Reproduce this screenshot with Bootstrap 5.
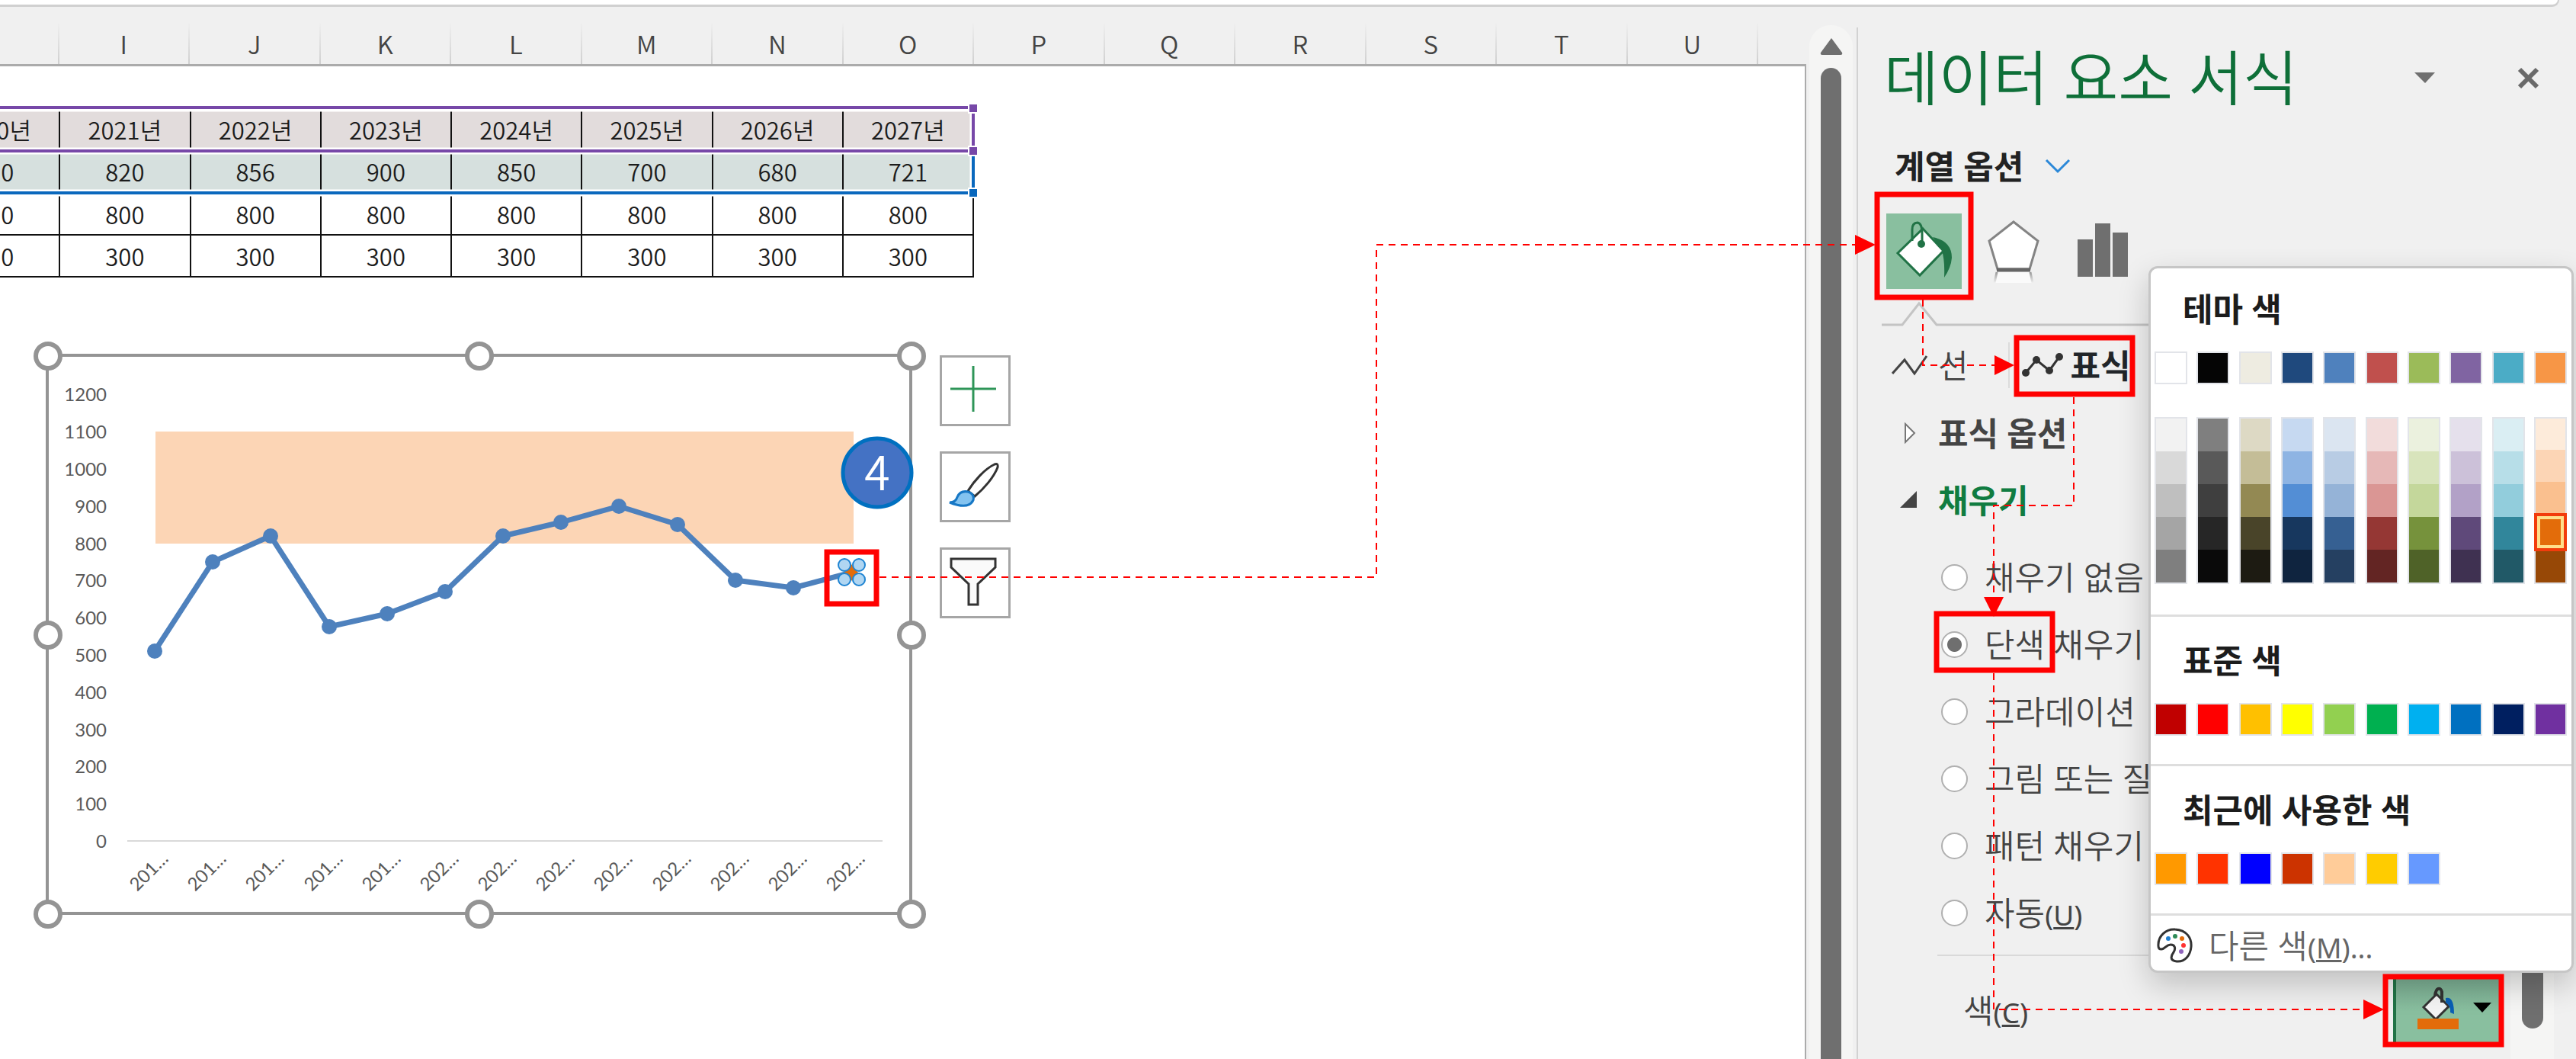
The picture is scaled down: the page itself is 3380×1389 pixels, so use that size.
<!DOCTYPE html>
<html lang="ko">
<head>
<meta charset="utf-8">
<meta name="viewport" content="width=device-width, initial-scale=1">
<title>데이터 요소 서식</title>
<link rel="stylesheet" href="https://cdn.jsdelivr.net/npm/bootstrap@5.3.0/dist/css/bootstrap.min.css">
<style>
  body{font-family:"Noto Sans","Noto Sans CJK KR",sans-serif;background:#f0f0f0;color:#444;font-size:43px;line-height:1;height:100vh}
  .formula-strip{height:9px;background:#fff;border-bottom:3px solid #d0d0d0;border-right:2px solid #d0d0d0;border-bottom-right-radius:12px;margin-right:22px}
  /* worksheet */
  .col-heads{height:78px;padding-top:22px;border-bottom:3px solid #ababab;overflow:hidden}
  .col-heads>div{margin-left:-94px}
  .col-heads span{flex:1 1 0;display:flex;align-items:center;justify-content:center;border-right:2px solid;border-image:linear-gradient(#efefef,#cfcfcf) 1;font-family:"Noto Sans CJK KR",sans-serif;font-size:33px;font-weight:350}
  .col-heads span.sel-col{color:#1e88e5}
  .col-heads .tail{flex:0 0 63px;border:0}
  .sheet-body{background:#fff;border-right:2px solid #ababab;overflow:hidden;padding-top:54px}
  .range-wrap{width:1372px;margin-left:-94px}
  .range-table{width:100%;height:223px;table-layout:fixed;border-collapse:collapse;color:#1c1c1c;text-align:center;font-family:"Noto Sans CJK KR",sans-serif;font-size:31px;line-height:31px}
  .range-table th,.range-table td{border:2px solid #111;font-weight:350;padding:0;vertical-align:middle}
  .range-table .years{background:#e2dcdc}
  .range-table .values{background:#d6e0de}
  .range-marks{left:0;top:-8px;pointer-events:none}
  .chart-row{margin-top:84px;padding-left:44px}
  .chart-row svg text{font-family:Lato,sans-serif;font-size:24px;fill:#595959}
  .chart-tools{gap:33px;margin-left:18px;padding-top:18px}
  .chart-tools button{width:93px;height:93px;background:#fff;border:3px solid #a6a6a6;padding:0;display:flex}
  .v-track{width:57px;background:#f5f5f4;border-radius:28px 28px 0 0;margin:24px 5px 0 4px;padding-top:16px}
  .v-thumb{width:27px;background:#6f6f6f;border-radius:14px 14px 0 0;margin-top:16px}
  /* pane */
  .fmt-pane{width:944px;margin-top:27px;border-left:2px solid #d2d2d2;padding-top:16px}
  .pane-head{height:100px;padding:0 48px 0 34px}
  .pane-head h1{font-size:78px;font-weight:350;color:#0e6f38;margin:0;line-height:98px}
  .plain-btn{background:none;border:0;padding:0;display:flex}
  .opt-row{height:128px;padding:4px 0 0 48px;font-weight:700;color:#222;gap:28px}
  .icon-tabs{height:99px;padding-left:37px;gap:34px}
  .icon-tabs button{height:99px}
  .tile-on{width:99px;background:#89bf9f}
  .notch{display:block;margin-left:31px}
  .sub-tabs{height:100px;padding-left:44px}
  .sub-tabs .sep{width:2px;height:60px;background:#dcdcdc;margin:0 16px 0 52px}
  .sec-row{height:78px;padding-left:53px;font-weight:700}
  .sec-row.open-sec{height:98px;color:#107c41}
  .sec-row svg{flex:none}
  .fill-list{padding:8px 0 0 109px}
  .fill-list .form-check{height:88px;margin:0;padding:0;display:flex;align-items:center;gap:22px;white-space:nowrap}
  .fill-list .form-check-input{width:35px;height:35px;margin:0;float:none;border:2px solid #b0b0b0;background-color:#fff}
  .fill-list .form-check-input:checked{background-image:radial-gradient(circle,#6f6f6f 0 9px,transparent 10px);background-size:100% 100%}
  .thin{font-weight:350}
  .key{font-size:37px;font-weight:400}
  .pane-rule{height:2px;background:#d9d9d9;margin:11px 0 0 104px}
  .color-row{height:83px;margin-top:30px;padding-left:138px;padding-right:15px}
  .color-btn{width:139px;height:83px;border:0;border-left:4px solid #217346;background:linear-gradient(#79ab90,#89bf9f 50%);padding:0}
  .p-track{width:57px;background:#f5f5f4;margin-right:29px}
  .p-thumb{width:28px;height:920px;background:#6f6f6f;border-radius:14px}
  /* colour menu */
  .color-menu{top:349px;right:3px;width:558px;background:#fff;border:3px solid #c6c6c6;border-radius:12px;box-shadow:0 16px 40px rgba(0,0,0,.2);z-index:3;padding-top:24px}
  .color-menu h2{font-size:43px;line-height:60px;font-weight:700;color:#1c1c1c;margin:0 0 25px 42px}
  .sw-grid{display:grid;grid-template-columns:repeat(10,43px);justify-content:space-between;padding:0 6px 0 5px}
  .sw{height:43px;border:2px solid #e2e4e9;padding:0;display:block;width:43px}
  .shade{border:2px solid #e2e4e9;height:219px;display:flex;flex-direction:column}
  .shade button{flex:1 1 0;border:0;padding:0}
  .shade .picked{margin:0 -2px;border:4px solid #f23c0c;box-shadow:inset 0 0 0 4px #ffdf8c}
  .menu-rule{height:3px;background:#dedede;margin:37px 0 28px}
  #shades{margin-top:43px;padding-bottom:3px}
  .more-link{height:72px;margin-top:-28px;padding:6px 0 0 8px;gap:21px;color:#666;text-decoration:none}
  .notes{left:0;top:0;z-index:5;pointer-events:none}
  .notes text{font-family:"Noto Sans CJK KR",sans-serif;font-size:61px;font-weight:350;fill:#fff}
</style>
<script src="https://cdn.jsdelivr.net/npm/bootstrap@5.3.0/dist/js/bootstrap.bundle.min.js"></script>
</head>
<body class="d-flex flex-column overflow-hidden position-relative">
<div class="formula-strip flex-shrink-0"></div>
<div class="d-flex flex-grow-1" style="min-height:0">
  <main class="d-flex flex-column flex-grow-1" style="min-width:0">
    <div class="col-heads flex-shrink-0"><div class="d-flex h-100"><span class="sel-col">H</span><span>I</span><span>J</span><span>K</span><span>L</span><span>M</span><span>N</span><span>O</span><span>P</span><span>Q</span><span>R</span><span>S</span><span>T</span><span>U</span><span class="tail"></span></div></div>
    <div class="sheet-body flex-grow-1">
      <div class="range-wrap position-relative">
        <table class="range-table">
          <tr class="years"><th scope="col">2020년</th><th scope="col">2021년</th><th scope="col">2022년</th><th scope="col">2023년</th><th scope="col">2024년</th><th scope="col">2025년</th><th scope="col">2026년</th><th scope="col">2027년</th></tr>
          <tr class="values"><td>820</td><td>820</td><td>856</td><td>900</td><td>850</td><td>700</td><td>680</td><td>721</td></tr>
          <tr><td>800</td><td>800</td><td>800</td><td>800</td><td>800</td><td>800</td><td>800</td><td>800</td></tr>
          <tr><td>300</td><td>300</td><td>300</td><td>300</td><td>300</td><td>300</td><td>300</td><td>300</td></tr>
        </table>
        <svg class="range-marks position-absolute" width="1386" height="140" viewBox="0 0 1386 140" aria-hidden="true">
          <path d="M0 9H1371V65H0M1371 65V120H0" fill="none" stroke="#fff" stroke-width="9"/>
          <path d="M0 8H1371V65H0" fill="none" stroke="#7748a8" stroke-width="4"/>
          <path d="M1371 67V120H0" fill="none" stroke="#0a68bd" stroke-width="4"/>
          <g stroke="#fff" stroke-width="2"><path d="M1365 3h12v12h-12zM1365 59h12v12h-12z" fill="#7748a8"/><path d="M1365 114h12v12h-12z" fill="#0a68bd"/></g>
        </svg>
      </div>
      <div class="chart-row d-flex align-items-start">
        <svg id="chart" width="1171" height="770" viewBox="44 449 1171 770" role="img" aria-label="꺾은선형 차트">
          <rect x="62" y="467" width="1133" height="732" fill="#fff" stroke="#949494" stroke-width="4"/>
          <rect x="204" y="567" width="916" height="147" fill="#fcd5b5"/>
          <path d="M167 1104H1158" stroke="#d9d9d9" stroke-width="2"/>
          <g id="yLabels" text-anchor="end"></g><g id="xLabels"></g>
          <polyline id="line" fill="none" stroke="#4e81bd" stroke-width="7" stroke-linejoin="round"/>
          <g id="dots" fill="#4e81bd"></g>
          <path d="M1117 741l9 11-9 11-9-11z" fill="#e36c0a"/>
          <g fill="#b0d6f2" stroke="#1f84d2" stroke-width="2"><circle cx="1108" cy="742" r="8"/><circle cx="1127" cy="742" r="8"/><circle cx="1108" cy="761" r="8"/><circle cx="1127" cy="761" r="8"/></g>
          <g fill="#fff" stroke="#949494" stroke-width="6"><circle cx="63" cy="468" r="16"/><circle cx="629" cy="468" r="16"/><circle cx="1196" cy="468" r="16"/><circle cx="63" cy="834" r="16"/><circle cx="1196" cy="834" r="16"/><circle cx="63" cy="1200" r="16"/><circle cx="629" cy="1200" r="16"/><circle cx="1196" cy="1200" r="16"/></g>
        </svg>
        <div class="chart-tools d-flex flex-column">
          <button type="button" aria-label="차트 요소"><svg width="87" height="87" viewBox="0 0 87 87"><path d="M11 41H71M41 11V71" stroke="#2e9558" stroke-width="3"/></svg></button>
          <button type="button" aria-label="차트 스타일"><svg width="87" height="87" viewBox="0 0 87 87"><path d="M34 49C42 36 56 20 69 14Q74 12 73 18C68 31 55 46 43 56Z" fill="#fff" stroke="#333" stroke-width="3"/><path d="M10 64Q18 64 20 57Q24 48 34 50Q43 53 41 61Q35 74 10 64Z" fill="#83c3f0" stroke="#1677c5" stroke-width="3"/></svg></button>
          <button type="button" aria-label="차트 필터"><svg width="87" height="87" viewBox="0 0 87 87"><path d="M12 12H70V23L47 45V72H35V45L12 23Z" fill="#fafafa" stroke="#333" stroke-width="3"/></svg></button>
        </div>
      </div>
    </div>
  </main>
  <div class="v-track d-flex flex-column align-items-center flex-shrink-0">
    <svg class="flex-shrink-0" width="30" height="24" viewBox="0 0 30 24"><path d="M15 1 29 20Q30 23 27 23H3Q0 23 1 20Z" fill="#6f6f6f"/></svg>
    <div class="v-thumb flex-grow-1"></div>
  </div>
  <aside class="fmt-pane d-flex flex-column flex-shrink-0">
    <header class="pane-head d-flex align-items-center flex-shrink-0">
      <h1>데이터 요소 서식</h1>
      <button class="plain-btn ms-auto" type="button" aria-label="작업창 옵션"><svg width="27" height="15" viewBox="0 0 27 15"><path d="M0 0H27L14 14Z" fill="#6f6f6f"/></svg></button>
      <button class="plain-btn" type="button" aria-label="닫기" style="margin-left:108px"><svg width="29" height="29" viewBox="0 0 29 29"><path d="M3 3 26 26M26 3 3 26" stroke="#6a6a6a" stroke-width="6"/></svg></button>
    </header>
    <div class="opt-row d-flex align-items-center flex-shrink-0"><span>계열 옵션</span><button class="plain-btn" type="button" aria-label="계열 선택"><svg width="34" height="20" viewBox="0 0 34 20"><path d="M2 2 17 17 32 2" fill="none" stroke="#2b88d8" stroke-width="3"/></svg></button></div>
    <div class="icon-tabs d-flex align-items-center flex-shrink-0">
      <button class="plain-btn tile-on" type="button" aria-label="채우기 및 선"><svg width="99" height="99" viewBox="0 0 99 99"><path d="M61 31Q86 36 86 58Q85 71 76 84Q77 61 73 49Z" fill="#217346"/><path d="M48 20 75 49 44 81 15 52Z" fill="#fff" stroke="#217346" stroke-width="3"/><path d="M34 36V21Q34 12 41 12Q47 13 47 26V38" fill="none" stroke="#217346" stroke-width="3"/><circle cx="46" cy="40" r="5" fill="#217346"/></svg></button>
      <button class="plain-btn" type="button" aria-label="효과"><svg width="68" height="99" viewBox="0 0 68 99"><defs><linearGradient id="fade" x1="0" y1="0" x2="0" y2="1"><stop offset="0" stop-color="#999"/><stop offset="1" stop-color="#f0f0f0"/></linearGradient></defs><path d="M14 77H54L59 91H9Z" fill="#fafafa"/><path d="M12 77 9 91M56 77 59 91" stroke="url(#fade)" stroke-width="3"/><path d="M34 11 66 36 55 73H13L2 36Z" fill="#fff" stroke="#848484" stroke-width="3"/><path d="M12 74H56" stroke="#666" stroke-width="5"/></svg></button>
      <button class="plain-btn ms-3" type="button" aria-label="계열 옵션"><svg width="66" height="99" viewBox="0 0 66 99"><path d="M0 34H20V83H0ZM23 13H43V83H23ZM46 25H66V83H46Z" fill="#6f6f6f"/></svg></button>
    </div>
    <svg class="notch flex-shrink-0" width="400" height="50" viewBox="0 0 400 50"><path d="M0 47H27L49 19 72 47H400" fill="none" stroke="#c4c4c4" stroke-width="3"/></svg>
    <div class="d-flex flex-grow-1" style="min-height:0">
      <div class="flex-grow-1">
        <div class="sub-tabs d-flex align-items-center">
          <button class="plain-btn align-items-center" type="button" style="color:inherit;gap:13px"><svg width="48" height="28" viewBox="0 0 48 28"><path d="M1 25 17 7 30 25 46 2" fill="none" stroke="#444" stroke-width="3"/></svg><span class="thin">선</span></button>
          <span class="sep"></span>
          <button class="plain-btn align-items-center fw-bold text-dark" type="button" style="gap:10px"><svg width="54" height="32" viewBox="0 0 54 32"><path d="M5 26 19 9 36 23 49 5" fill="none" stroke="#333" stroke-width="3"/><g fill="#333"><circle cx="5" cy="26" r="5"/><circle cx="19" cy="9" r="5"/><circle cx="36" cy="23" r="5"/><circle cx="49" cy="5" r="5"/></g></svg><span>표식</span></button>
        </div>
        <div class="sec-row d-flex align-items-center"><svg width="52" height="28" viewBox="0 0 52 28"><path d="M9 2 21 14 9 26Z" fill="#fff" stroke="#777" stroke-width="2"/></svg><span>표식 옵션</span></div>
        <div class="sec-row open-sec d-flex align-items-center"><svg width="52" height="24" viewBox="0 0 52 24"><path d="M24 0V22H2Z" fill="#444"/></svg><span>채우기</span></div>
        <div class="fill-list thin">
          <div class="form-check"><input class="form-check-input" type="radio" name="fill" id="f1"><label for="f1">채우기 없음</label></div>
          <div class="form-check"><input class="form-check-input" type="radio" name="fill" id="f2" checked><label for="f2">단색 채우기</label></div>
          <div class="form-check"><input class="form-check-input" type="radio" name="fill" id="f3"><label for="f3">그라데이션</label></div>
          <div class="form-check"><input class="form-check-input" type="radio" name="fill" id="f4"><label for="f4">그림 또는 질</label></div>
          <div class="form-check"><input class="form-check-input" type="radio" name="fill" id="f5"><label for="f5">패턴 채우기</label></div>
          <div class="form-check"><input class="form-check-input" type="radio" name="fill" id="f6"><label for="f6">자동<span class="key">(<u>U</u>)</span></label></div>
        </div>
        <div class="pane-rule"></div>
        <div class="color-row d-flex align-items-center justify-content-between">
          <label class="thin" for="colorBtn">색<span class="key">(<u>C</u>)</span></label>
          <button class="color-btn" id="colorBtn" type="button" aria-label="채우기 색"><svg width="135" height="83" viewBox="0 0 135 83"><path d="M36 37 53 20 69 36 52 53Z" fill="#f4f4f4" stroke="#333" stroke-width="3"/><path d="M60 31V17Q59 12 55 13Q52 14 51 22" fill="none" stroke="#333" stroke-width="4"/><path d="M65 25Q76 22 76 46L71 44Q72 35 65 31Z" fill="#0a5fb5"/><path d="M28 52H82V66H28Z" fill="#e36c0a"/><path d="M101 31H125L113 44Z" fill="#000"/></svg></button>
        </div>
      </div>
      <div class="p-track d-flex justify-content-center flex-shrink-0"><div class="p-thumb flex-shrink-0"></div></div>
    </div>
  </aside>
</div>

<section class="color-menu position-absolute" aria-label="색 선택">
  <h2>테마 색</h2>
  <div class="sw-grid" id="theme"></div>
  <div class="sw-grid" id="shades"></div>
  <div class="menu-rule"></div>
  <h2>표준 색</h2>
  <div class="sw-grid" id="standard"></div>
  <div class="menu-rule"></div>
  <h2>최근에 사용한 색</h2>
  <div class="sw-grid" id="recent"></div>
  <div class="menu-rule"></div>
  <a class="more-link d-flex align-items-center" href="#"><svg width="47" height="46" viewBox="0 0 47 46"><path d="M2 24C1 10 13 1 24 2C39 3 46 13 45 25C44 36 37 45 26 44C16 43 19 36 22 32C25 27 24 22 18 22C12 22 11 28 6 28Q2 28 2 24Z" fill="#fff" stroke="#333" stroke-width="3"/><circle cx="15" cy="14" r="3" fill="#1f7fd0"/><circle cx="24" cy="11" r="3" fill="#2e8b57"/><circle cx="33" cy="14" r="3" fill="#e36c0a"/><circle cx="35" cy="23" r="3" fill="#f33"/><circle cx="32" cy="31" r="3" fill="#9064bd"/></svg><span class="thin">다른 색<span class="key thin">(<u>M</u>)...</span></span></a>
</section>

<svg class="notes position-absolute" width="3380" height="1389" viewBox="0 0 3380 1389" aria-hidden="true">
  <g fill="none" stroke="#f00" stroke-width="2" stroke-dasharray="9 7">
    <path d="M1154 757H1806V321H2436"/><path d="M2523 393V479H2618"/><path d="M2721 521V663H2616V785"/><path d="M2616 883V1324H3104"/>
  </g>
  <path d="M2434 308 2461 321 2434 334ZM2617 466 2643 479 2617 492ZM2603 783H2629L2616 809ZM3101 1311 3128 1324 3101 1337Z" fill="#f00"/>
  <g fill="none" stroke="#f00" stroke-width="7"><path d="M1085 724H1150V792H1085ZM2463 255H2586V390H2463ZM2646 443H2798V517H2646ZM2541 805H2693V879H2541ZM3130 1281H3282V1370H3130Z"/></g>
  <circle cx="1151" cy="620" r="45" fill="#4472c4" stroke="#0070c0" stroke-width="5"/>
  <text x="1151" y="643" text-anchor="middle">4</text>
</svg>

<script>
  const NS = 'http://www.w3.org/2000/svg';
  const el = (parent, name, attrs, text) => {
    const n = document.createElementNS(NS, name);
    for (const k in attrs) n.setAttribute(k, attrs[k]);
    if (text !== undefined) n.textContent = text;
    document.getElementById(parent).appendChild(n);
  };
  const data = [510, 750, 820, 575, 610, 670, 820, 856, 900, 850, 700, 680, 721];
  const px = i => Math.round(203 + i * 914 / 12), py = v => Math.round(1104 - v * 0.488);
  document.getElementById('line').setAttribute('points', data.map((v, i) => px(i) + ',' + py(v)).join(' '));
  data.forEach((v, i) => {
    if (i < 12) el('dots', 'circle', {cx: px(i), cy: py(v), r: 10});
    const x = px(i) - 23;
    el('xLabels', 'text', {x: x, y: 1171, transform: `rotate(-45 ${x} 1171)`}, i < 5 ? '201…' : '202…');
  });
  for (let v = 0; v <= 1200; v += 100) el('yLabels', 'text', {x: 140, y: py(v) + 9}, v);

  const button = (c, cls) => `<button type="button" class="${cls}" style="background:${c}" aria-label="${c}"></button>`;
  const fill = (id, list) => document.getElementById(id).innerHTML = list.split(' ').map(c => button('#' + c, 'sw')).join('');
  fill('theme', 'ffffff 050505 eeece1 1f497d 4f81bd c0504d 9bbb59 8064a2 4bacc6 f79646');
  fill('standard', 'c00000 ff0000 ffc000 ffff00 92d050 00b050 00b0f0 0070c0 001f60 7030a0');
  fill('recent', 'ff9900 ff3300 0000ff cc3300 ffcc99 ffcc00 6699ff');
  const shades = ['f2f2f2 d9d9d9 bfbfbf a5a5a5 7f7f7f', '7f7f7f 595959 3f3f3f 262626 0a0a0a', 'ddd9c4 c4bd97 938953 494429 1d1b12', 'c6d9f1 8eb4e3 538ed5 17375e 0f243f', 'dbe5f1 b8cce4 95b3d7 366092 254061', 'f2dcdb e6b8b7 da9694 953734 632523', 'ebf1de d8e4bc c4d79b 76923c 4f6228', 'e5e0ec ccc1d9 b2a1c7 5f497a 3f3151', 'daeef3 b7dee8 92cddc 31869b 215967', 'fdebda fcd5b5 fac08f e36c0a 974806'];
  document.getElementById('shades').innerHTML = shades.map((s, c) => '<div class="shade">' + s.split(' ').map((h, r) => button('#' + h, c === 9 && r === 3 ? 'picked' : '')).join('') + '</div>').join('');
</script>
</body>
</html>
